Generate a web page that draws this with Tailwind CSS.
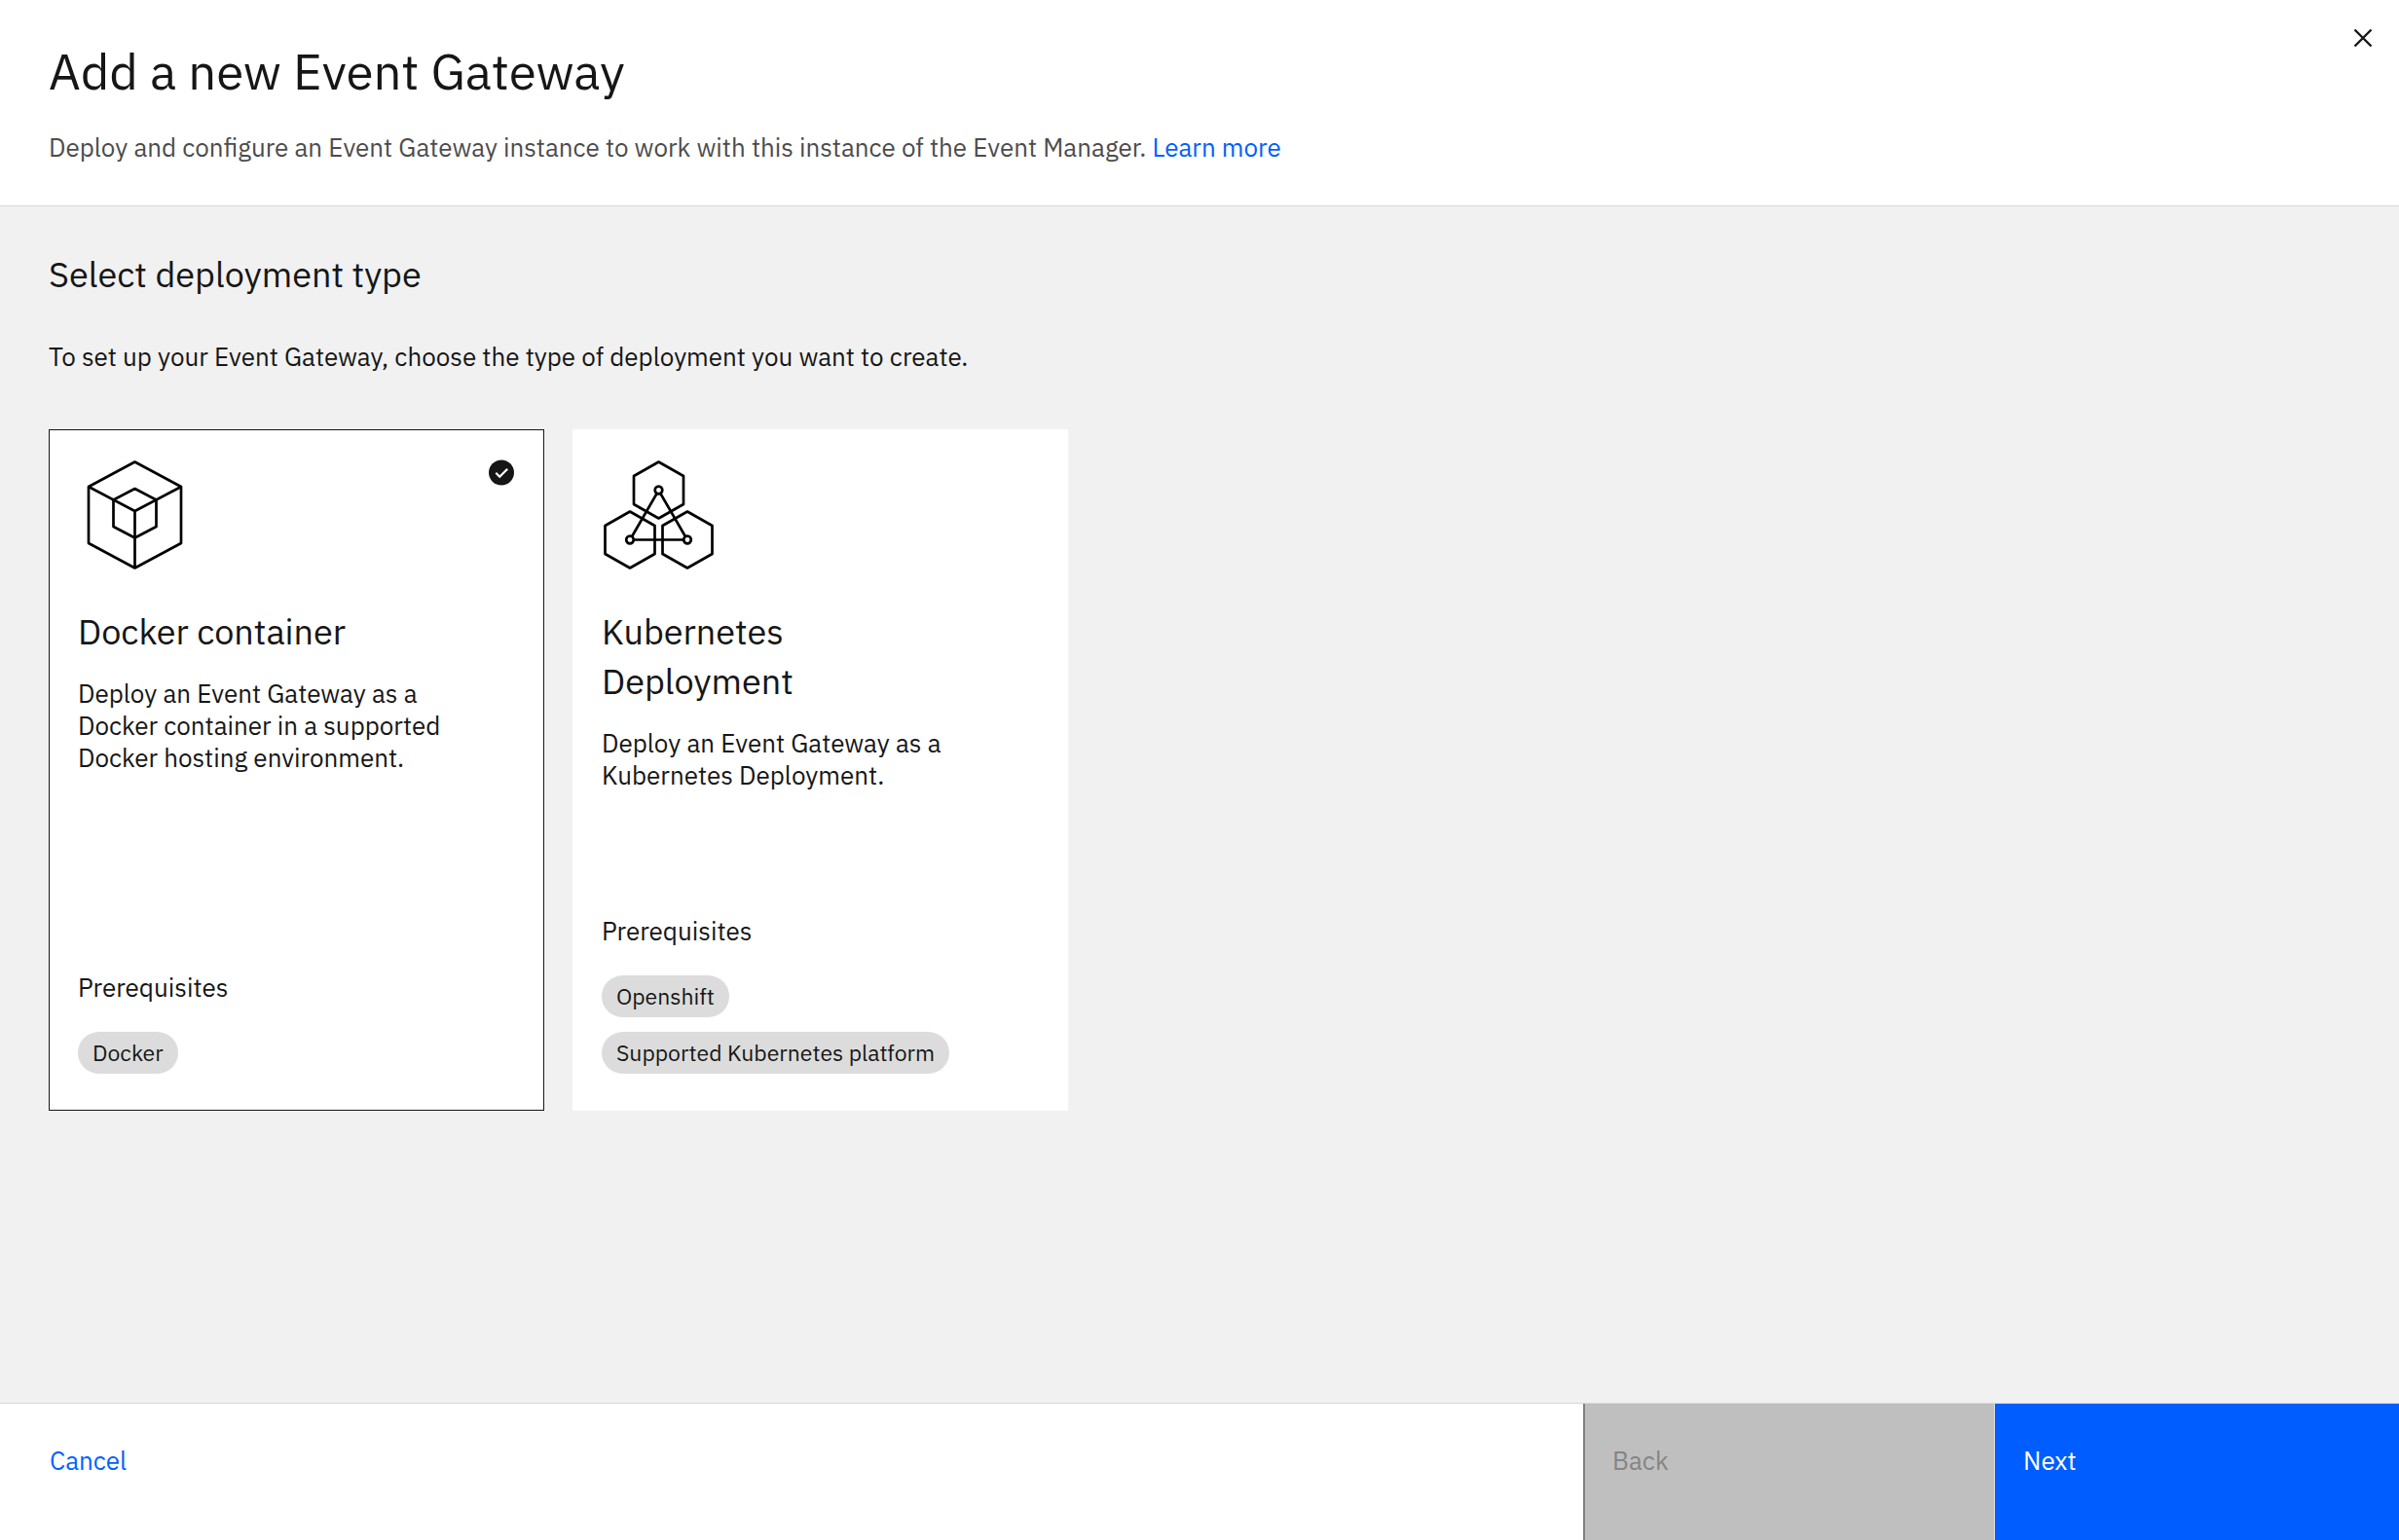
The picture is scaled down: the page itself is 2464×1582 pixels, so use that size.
<!DOCTYPE html>
<html lang="en">
<head>
<meta charset="utf-8">
<meta name="viewport" content="width=device-width, initial-scale=1">
<title>Add a new Event Gateway</title>
<script src="https://cdn.jsdelivr.net/npm/@tailwindcss/browser@4"></script>
</head>
<body class="flex min-h-screen flex-col bg-[#f1f1f1] font-['IBM_Plex_Sans',Roboto,sans-serif] text-[26px] leading-[33px] text-[#161616]">
  <header class="flex items-start justify-between border-b border-[#d8d8d8] bg-white pb-[43px] pl-[50px] pr-[22px] pt-6">
    <div class="pt-[19px]">
      <h1 class="text-[51px] leading-[60px]">Add a new Event Gateway</h1>
      <p class="mt-8 text-[#4c4c4c]">Deploy and configure an Event Gateway instance to work with this instance of the Event Manager. <a href="#" class="text-[#0060ff]">Learn more</a></p>
    </div>
    <button type="button" aria-label="Close" class="p-1">
      <svg class="size-[22px]" viewBox="0 0 22 22" fill="none" stroke="#161616" stroke-width="2.4"><path d="M2.5 2.5 19.5 19.5M19.5 2.5 2.5 19.5"/></svg>
    </button>
  </header>

  <main class="flex-1 px-[50px] pt-11">
    <h2 class="text-[36px] leading-[51px]">Select deployment type</h2>
    <p class="mt-[43px]" id="intro">To set up your Event Gateway, choose the type of deployment you want to create.</p>

    <div role="radiogroup" aria-labelledby="intro" class="mt-[58px] flex flex-wrap gap-[29px]">
      <label class="relative flex min-h-[700px] w-[509px] flex-col border border-[#161616] bg-white px-[29px] pb-[37px] pt-[29px]">
        <input type="radio" name="deployment" value="docker" checked class="sr-only">
        <span class="flex items-start justify-between">
          <svg class="size-[116px]" viewBox="0 0 116 116" fill="none" stroke="#000" stroke-width="2.7" stroke-linejoin="round">
            <path d="M58.500 3.500 106 29V87L58.500 112.500 11 87V29Z"/>
            <path d="M11 29 58.500 54 106 29M58.500 54V112.500"/>
            <path d="M58.500 31 80.500 42.500V70L58.500 81.500 36.500 70V42.500Z"/>
          </svg>
          <svg class="size-[28px]" viewBox="0 0 28 28"><circle cx="14" cy="14.500" r="13" fill="#161616"/><path d="m8.300 14.800 3.900 3.900 8-8" fill="none" stroke="#fff" stroke-width="2.200"/></svg>
        </span>
        <span class="mt-9 block pr-24 text-[36px] leading-[51px]">Docker container</span>
        <span class="mt-[22px] block pr-12">Deploy an Event Gateway as a Docker container in a supported Docker hosting environment.</span>
        <span class="mt-auto block">Prerequisites</span>
        <span class="mt-[29px] flex flex-col items-start gap-[15px] text-[23px] leading-[43px]">
          <span class="rounded-full bg-[#dcdcdc] px-[15px]">Docker</span>
        </span>
      </label>

      <label class="relative flex min-h-[700px] w-[509px] flex-col border border-white bg-white px-[29px] pb-[37px] pt-[29px]">
        <input type="radio" name="deployment" value="kubernetes" class="sr-only">
        <svg class="size-[116px]" viewBox="0 0 116 116" fill="none" stroke="#000" stroke-width="2.7" stroke-linejoin="round">
          <path d="M58.500 3.500 84 18V47L58.500 61.500 33 47V18Z"/>
          <path d="M29 54.500 54.500 69V98L29 112.500 3.500 98V69Z"/>
          <path d="M88 54.500 113.500 69V98L88 112.500 62.500 98V69Z"/>
          <path d="M56.600 36 31 80.300M60.400 36 86 80.300M33 83.500H84"/>
          <circle cx="58.500" cy="32.500" r="3.800"/><circle cx="29" cy="83.500" r="3.800"/><circle cx="88" cy="83.500" r="3.800"/>
        </svg>
        <span class="mt-9 block pr-24 text-[36px] leading-[51px]">Kubernetes Deployment</span>
        <span class="mt-[22px] block pr-12">Deploy an Event Gateway as a Kubernetes Deployment.</span>
        <span class="mt-auto block">Prerequisites</span>
        <span class="mt-[29px] flex flex-col items-start gap-[15px] text-[23px] leading-[43px]">
          <span class="rounded-full bg-[#dcdcdc] px-[15px]">Openshift</span>
          <span class="rounded-full bg-[#dcdcdc] px-[15px]">Supported Kubernetes platform</span>
        </span>
      </label>
    </div>
  </main>

  <footer class="flex h-[141px] border-t border-[#d8d8d8] bg-white">
    <button type="button" class="flex flex-1 items-start pl-[51px] pt-[42px] text-left text-[#0060ff]">Cancel</button>
    <button type="button" disabled class="flex w-[423px] items-start border-l-2 border-r border-l-[#808080] border-r-[#e0e0e0] bg-[#bfbfbf] pl-7 pt-[42px] text-left text-[#858585]">Back</button>
    <button type="button" class="flex w-[415px] items-start bg-[#005dff] pl-[29px] pt-[42px] text-left text-white">Next</button>
  </footer>
</body>
</html>
